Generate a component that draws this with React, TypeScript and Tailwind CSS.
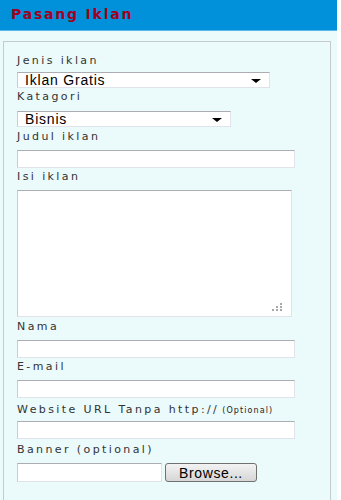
const fieldBox =
  "bg-white border border-[#e0e4ea] border-t-[#abadb3] border-l-[#c9ccd3]";

const Label = ({ text, extra, className = "" }: { text: string; extra?: string; className?: string }) => (
  <div
    className={`h-[18px] leading-[18px] whitespace-nowrap text-[11px] tracking-[2.4px] text-[#333] ${className}`}
    style={{ fontFamily: '"DejaVu Sans", Verdana, sans-serif' }}
  >
    {text}
    {extra && <span className="ml-[3px] text-[8px] tracking-[1.1px] text-[#222]">{extra}</span>}
  </div>
);

const FakeSelect = ({ value, width, className = "" }: { value: string; width: string; className?: string }) => (
  <div className={`${fieldBox} ${width} h-[16px] flex items-center justify-between pl-[7px] pr-[8px] ${className}`}>
    <span
      className="text-[14px] leading-none tracking-[0.8px] text-black"
      style={{ fontFamily: '"Liberation Sans", Arial, sans-serif' }}
    >
      {value}
    </span>
    <svg width="10" height="5" viewBox="0 0 10 5" className="mt-[3px]">
      <polygon points="0,0 10,0 5,4" fill="#000" />
    </svg>
  </div>
);

const TextInput = ({ width = "w-[278px]", className = "" }: { width?: string; className?: string }) => (
  <div className={`${fieldBox} ${width} h-[18px] ${className}`} />
);

export default function App() {
  return (
    <div className="w-[341px] h-[500px] bg-white overflow-hidden">
      <div className="w-[337px] h-[500px] bg-[#ebfafb]">
        <div className="h-[31px] bg-[#0091da] border-b border-[#5cb8e6] flex items-center pl-[11px] pb-[2px]">
          <span
            className="text-[14px] font-bold tracking-[1.8px] text-[#a00020]"
            style={{ fontFamily: '"DejaVu Sans", Verdana, sans-serif' }}
          >
            Pasang Iklan
          </span>
        </div>

        <div className="ml-[3px] mt-[10px] w-[328px] h-[470px] border border-[#c6caca] border-b-0 pl-[13px] pt-[10px]">
          <Label text="Jenis iklan" />
          <FakeSelect value="Iklan Gratis" width="w-[253px]" className="mt-[2px]" />
          <Label text="Katagori" />
          <FakeSelect value="Bisnis" width="w-[214px]" className="mt-[5px]" />
          <Label text="Judul iklan" className="mt-[1px]" />
          <TextInput className="mt-[4px]" />
          <Label text="Isi iklan" />
          <div className={`${fieldBox} w-[275px] h-[127px] mt-[4px] relative`}>
            <svg width="11" height="9" viewBox="0 0 11 9" className="absolute right-[8px] bottom-[4px]">
              <rect x="8" y="0" width="2" height="2" fill="#a8a8a8" />
              <rect x="4" y="3" width="2" height="2" fill="#a8a8a8" />
              <rect x="8" y="3" width="2" height="2" fill="#a8a8a8" />
              <rect x="0" y="6" width="2" height="2" fill="#a8a8a8" />
              <rect x="4" y="6" width="2" height="2" fill="#a8a8a8" />
              <rect x="8" y="6" width="2" height="2" fill="#a8a8a8" />
            </svg>
          </div>
          <Label text="Nama" className="mt-[1px]" />
          <TextInput className="mt-[4px]" />
          <Label text="E-mail" />
          <TextInput className="mt-[4px]" />
          <Label text="Website URL Tanpa http://" extra="(Optional)" className="mt-[3px]" />
          <TextInput className="mt-[2px]" />
          <Label text="Banner (optional)" className="mt-[2px]" />
          <div className="mt-[4px] flex items-center gap-[3px]">
            <div className={`${fieldBox} w-[145px] h-[19px]`} />
            <button
              className="w-[92px] h-[19px] rounded-[3px] border border-[#707070] bg-gradient-to-b from-[#f3f3f3] to-[#d6d6d6] text-[14px] leading-none tracking-[0.6px] text-black"
              style={{ fontFamily: '"Liberation Sans", Arial, sans-serif' }}
            >
              Browse...
            </button>
          </div>
        </div>
      </div>
    </div>
  );
}
